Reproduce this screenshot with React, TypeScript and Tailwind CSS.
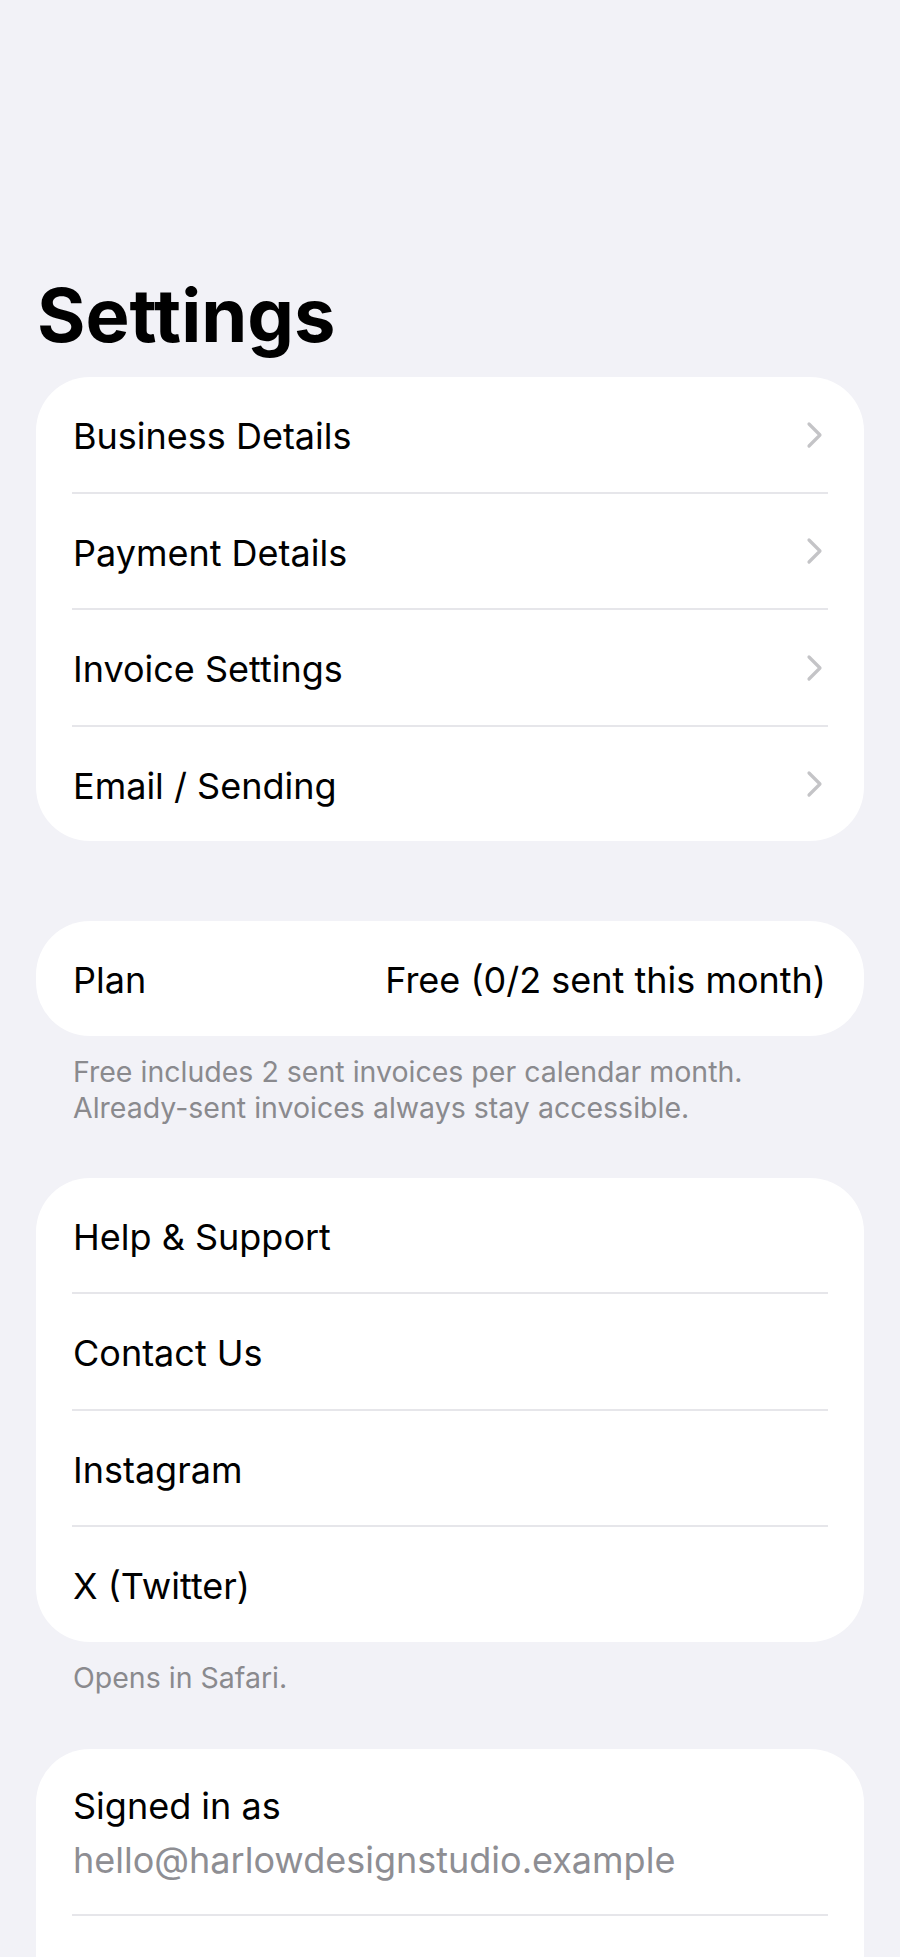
import React from 'react';

const font = { fontFamily: 'Inter, "Noto Sans", sans-serif' };

const Chevron: React.FC = () => (
  <svg width="18" height="28" viewBox="0 0 18 28" fill="none" className="shrink-0 -mt-[3px]">
    <path d="M3 3 L14 14 L3 25" stroke="#c4c4c7" strokeWidth="3.2" strokeLinecap="round" strokeLinejoin="round" />
  </svg>
);

const Separator: React.FC = () => <div className="ml-[36px] mr-[36px] h-[2px] bg-[#e6e6ea]" />;

const Row: React.FC<{ label: string; chevron?: boolean; value?: string }> = ({ label, chevron, value }) => (
  <div className="h-[114.5px] flex items-center justify-between pt-[4px] pl-[37px] pr-[40px] text-[36px] text-black">
    <span>{label}</span>
    {chevron && <Chevron />}
    {value && <span className="-mr-[2px]">{value}</span>}
  </div>
);

const Group: React.FC<{ items: string[]; chevron?: boolean }> = ({ items, chevron }) => (
  <div className="bg-white rounded-[54px] overflow-hidden">
    {items.map((item, i) => (
      <div key={item}>
        {i > 0 && <Separator />}
        <Row label={item} chevron={chevron} />
      </div>
    ))}
  </div>
);

const Footer: React.FC<{ children: React.ReactNode }> = ({ children }) => (
  <p className="mt-[18px] px-[37px] text-[28.5px] leading-[36px] text-[#8a8a8e]">{children}</p>
);

export default function App() {
  return (
    <div className="h-[1957px] overflow-hidden bg-[#f2f2f7] px-[36px]" style={font}>
      <h1 className="pt-[278px] pl-[1px] text-[74px] leading-none font-bold text-black">Settings</h1>

      <div className="mt-[25px]">
        <Group items={['Business Details', 'Payment Details', 'Invoice Settings', 'Email / Sending']} chevron />
      </div>

      <div className="mt-[80px] bg-white rounded-[54px]">
        <Row label="Plan" value="Free (0/2 sent this month)" />
      </div>
      <Footer>
        Free includes 2 sent invoices per calendar month.
        <br />
        Already-sent invoices always stay accessible.
      </Footer>

      <div className="mt-[52px]">
        <Group items={['Help & Support', 'Contact Us', 'Instagram', 'X (Twitter)']} />
      </div>
      <Footer>Opens in Safari.</Footer>

      <div className="mt-[53px] bg-white rounded-[54px]">
        <div className="pt-[30px] pb-[27px] pl-[37px] text-[36px] leading-[54px]">
          <div className="text-black">Signed in as</div>
          <div className="text-[#8e8e93]">hello@harlowdesignstudio.example</div>
        </div>
        <Separator />
        <div className="h-[114.5px]" />
      </div>
    </div>
  );
}
